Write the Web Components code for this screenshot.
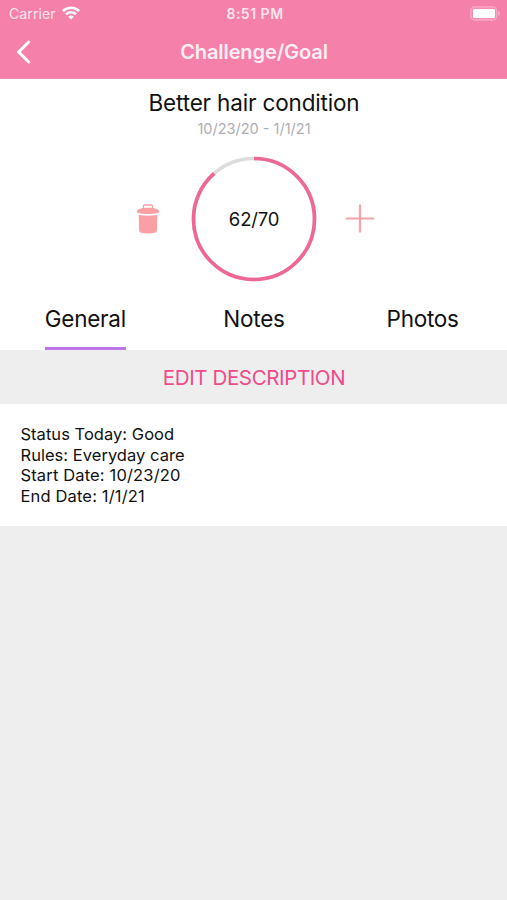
<!DOCTYPE html>
<html lang="en">
<head>
<meta charset="utf-8">
<title>Challenge/Goal</title>
<style>
html,body{margin:0;height:100%}
body{background:#eee;font-family:Inter,"Liberation Sans",sans-serif;color:#111}
</style>
</head>
<body>
<challenge-screen></challenge-screen>
<script>
const define = (name, html) => customElements.define(name, class extends HTMLElement {
  connectedCallback() {
    if (this.shadowRoot) return;
    const t = document.createElement('template');
    t.innerHTML = html;
    this.attachShadow({ mode: 'open' }).append(t.content.cloneNode(true));
  }
});

define('status-bar', `
<style>
:host{display:grid;grid-template-columns:1fr auto 1fr;align-items:center;height:26px;padding:0 6px 0 9px;color:#ffe4ee;font-size:14px;line-height:20px;box-sizing:border-box}
.left{display:flex;align-items:center;gap:6px}
.carrier{letter-spacing:.1px;padding-top:1px}
.time{font-weight:600;letter-spacing:.5px;padding-top:1px}
.battery{justify-self:end}
svg{display:block}
</style>
<div class="left"><span class="carrier">Carrier</span>
<svg width="18" height="14" viewBox="0 0 18 14" fill="none" stroke="#fff" stroke-width="2.5"><path d="M.9 5.100a11.500 11.500 0 0 1 16.200 0M4 8.400a7.100 7.100 0 0 1 10 0"/><path d="M9 13.600 6.200 10.800a4 4 0 0 1 5.600 0z" fill="#fff" stroke="none"/></svg></div>
<span class="time">8:51 PM</span>
<svg class="battery" width="31" height="15" viewBox="0 0 31 15"><rect x=".8" y=".8" width="25.800" height="13.200" rx="3.800" fill="#f78fb3" stroke="#f9a9c6" stroke-width="1.300"/><rect x="3" y="3" width="22" height="9" rx="1.200" fill="#fff"/><path d="M28 5v5q2-.8 2-2.500t-2-2.500z" fill="#f9a9c6"/></svg>`);

define('nav-bar', `
<style>
:host{display:grid;grid-template-columns:1fr auto 1fr;align-items:center;height:52px;padding:0 15px 0 16px;box-sizing:border-box;color:#ffeef4}
h1{margin:0;font-size:20px;font-weight:600;line-height:24px;letter-spacing:-.1px}
svg{display:block}
</style>
<svg width="16" height="24" viewBox="0 0 16 24" fill="none" stroke="#fff" stroke-width="3" stroke-linecap="round" stroke-linejoin="miter"><path d="M12.700 2 2.700 12 12.700 22"/></svg>
<h1><slot></slot></h1><span></span>`);

define('progress-ring', `
<style>
:host{display:grid;place-items:center;width:126px;height:126px}
svg,span{grid-area:1/1}
span{font-size:18.500px;line-height:24px;color:#111;letter-spacing:-.2px}
</style>
<svg width="126" height="126" viewBox="0 0 126 126" fill="none" stroke-width="3.700"><circle cx="63" cy="63" r="60.500" stroke="#dcdcdc"/><circle cx="63" cy="63" r="60.500" stroke="#ef6797" pathLength="70" stroke-dasharray="62 8" transform="rotate(-90 63 63)"/></svg>
<span><slot></slot></span>`);

define('goal-summary', `
<style>
:host{display:flex;flex-direction:column;align-items:center;height:209px;background:#fff;padding-left:1px;box-sizing:border-box}
h2{margin:10px 0 0;font-size:22.500px;font-weight:400;line-height:28px;letter-spacing:-.16px}
.dates{font-size:14.500px;line-height:20px;color:#aeaeb2;margin-top:2px}
.row{display:grid;grid-template-columns:30px 126px 30px;gap:28px;align-items:center;justify-items:center;margin-top:17px}
svg{display:block}
</style>
<h2><slot name="title"></slot></h2>
<div class="dates"><slot name="dates"></slot></div>
<div class="row">
<svg width="24" height="30" viewBox="0 0 24 30" fill="#faa0a5"><path d="M7.500 4V2.200Q7.500 1 8.700 1h6.600q1.200 0 1.200 1.200V4" fill="none" stroke="#faa0a5" stroke-width="1.300"/><path d="M1 7.500C1 5 6 3.800 12 3.800S23 5 23 7.500v.3q0 .9-1 1.100C16 10.300 8 10.300 2 8.900q-1-.2-1-1.100z"/><path d="M2.700 10.700q9.300 2 18.600 0L20.900 26.500q0 1.700-1.900 2.200-7 1.500-14 0-1.900-.5-1.900-2.200z"/></svg>
<progress-ring><slot name="progress"></slot></progress-ring>
<svg width="30" height="30" viewBox="0 0 30 30" stroke="#f8a1a7" stroke-width="2.200"><path d="M15 .5v28M1 14.500h28"/></svg>
</div>`);

define('tab-item', `
<style>
:host{display:flex;justify-content:center}
span{display:block;height:62px;box-sizing:border-box;padding-top:17px;font-size:22.500px;line-height:28px;letter-spacing:-.25px;border-bottom:3px solid transparent}
:host([selected]) span{border-color:#bd76e6}
</style><span><slot></slot></span>`);
define('tab-strip', `
<style>:host{display:grid;grid-template-columns:repeat(3,1fr);height:62px;background:#fff;padding-left:1px}</style><slot></slot>`);

define('edit-button', `
<style>:host{display:block}
button{display:block;width:100%;height:54px;border:0;padding:2px 0 0 1px;background:#eee;color:#ef4b8b;font:400 20.500px/52px Inter,"Liberation Sans",sans-serif;letter-spacing:-.38px}</style><button><slot></slot></button>`);

define('goal-details', `
<style>:host{display:block;box-sizing:border-box;height:122px;padding:20px 20.500px;background:#fff;font-size:16.500px;line-height:20.700px}
::slotted(div){width:max-content;letter-spacing:.03px}
::slotted(.date){letter-spacing:.15px}</style><slot></slot>`);

define('challenge-screen', `
<style>:host{display:block}
header{background:#f580aa;border-bottom:1px solid #f48eb2}
</style>
<header><status-bar></status-bar><nav-bar><span>Challenge/Goal</span></nav-bar></header>
<goal-summary><span slot="title">Better hair condition</span><span slot="dates">10/23/20 - 1/1/21</span><span slot="progress">62/70</span></goal-summary>
<tab-strip><tab-item selected><span>General</span></tab-item><tab-item><span>Notes</span></tab-item><tab-item><span>Photos</span></tab-item></tab-strip>
<edit-button><span>EDIT DESCRIPTION</span></edit-button>
<goal-details><div>Status Today: Good</div><div>Rules: Everyday care</div><div class="date">Start Date: 10/23/20</div><div class="date">End Date: 1/1/21</div></goal-details>`);
</script>
</body>
</html>
